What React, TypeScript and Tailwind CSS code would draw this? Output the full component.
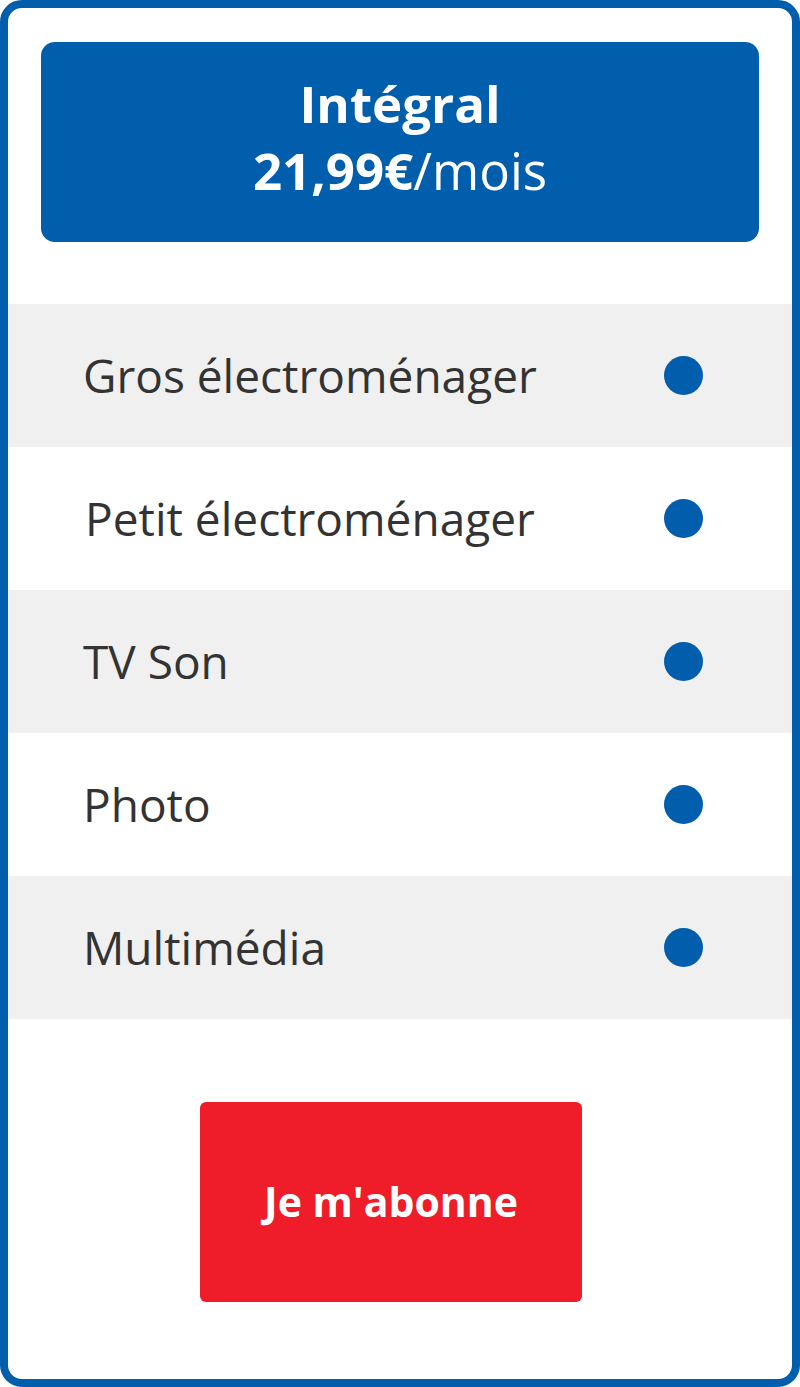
const features = [
  'Gros électroménager',
  'Petit électroménager',
  'TV Son',
  'Photo',
  'Multimédia',
];

export default function App() {
  return (
    <div className="w-[800px] h-[1387px] bg-white font-['Open_Sans',sans-serif]">
      <div className="h-full border-[8px] border-[#005eac] rounded-[22px] flex flex-col">
        {/* Header */}
        <div className="mx-[33px] mt-[34px] h-[200px] pb-[10px] rounded-[14px] bg-[#005eac] flex flex-col items-center justify-center text-white">
          <div className="text-[51px] font-bold leading-[67px]">Intégral</div>
          <div className="text-[51px] leading-[67px]">
            <span className="font-bold">21,99€</span>/mois
          </div>
        </div>

        {/* Features */}
        <div className="mt-[62px] flex flex-col">
          {features.map((f, i) => (
            <div
              key={f}
              className={
                'h-[143px] flex items-center justify-between pl-[75px] pr-[89px] ' +
                (i % 2 === 0 ? 'bg-[#f0f0f0]' : 'bg-white')
              }
            >
              <span className={'text-[46px] text-[#333333] ' + (i === 1 ? 'ml-[2px]' : '')}>{f}</span>
              <span className="w-[39px] h-[39px] rounded-full bg-[#005eac]" />
            </div>
          ))}
        </div>

        {/* CTA */}
        <div className="mt-[83px] flex justify-center">
          <button className="w-[382px] h-[200px] ml-[-18px] rounded-[6px] bg-[#ee1d29] text-white text-[41px] font-bold">
            Je m'abonne
          </button>
        </div>
      </div>
    </div>
  );
}
